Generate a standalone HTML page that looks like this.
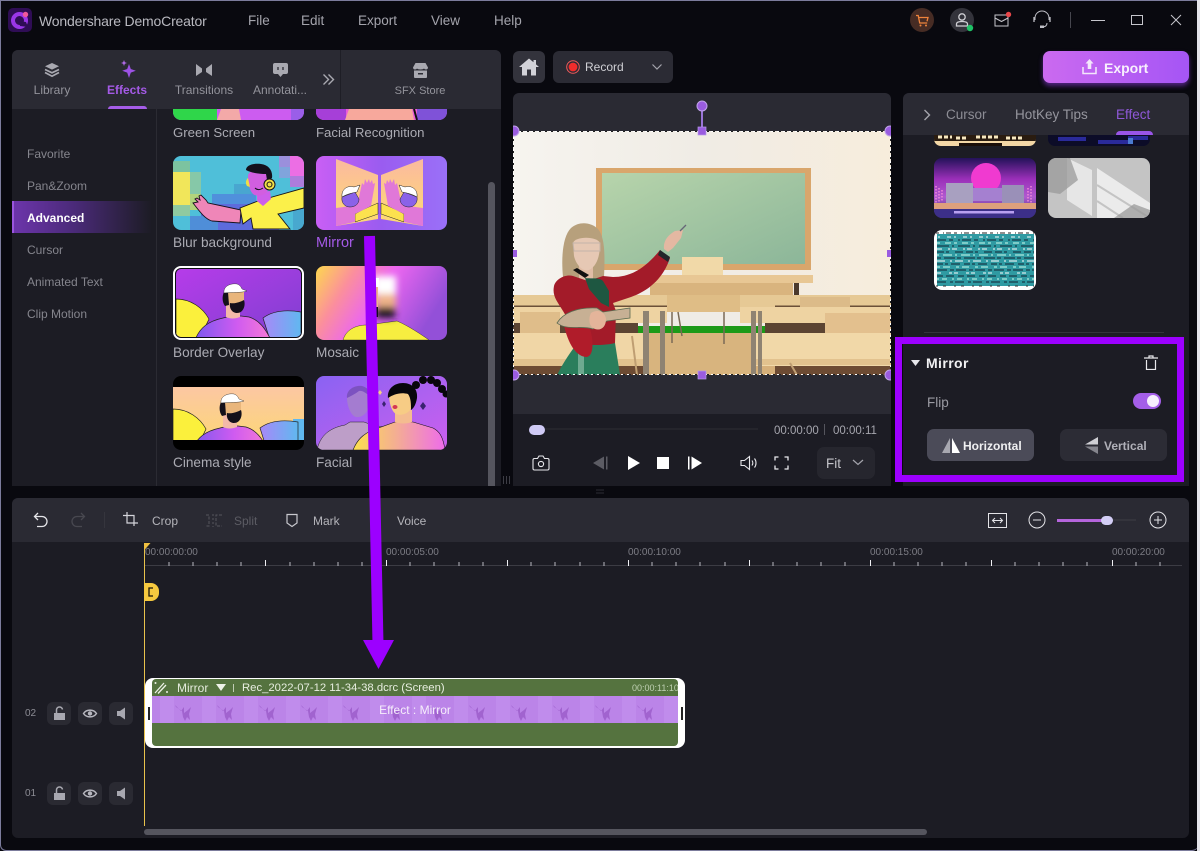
<!DOCTYPE html>
<html lang="en"><head><meta charset="utf-8"><title>Wondershare DemoCreator</title>
<style>
*{box-sizing:border-box}
html,body{margin:0;padding:0;width:1200px;height:851px;overflow:hidden;background:#08080e}
body{position:relative;font-family:"Liberation Sans","Noto Sans CJK SC",sans-serif;color:#aaa}
.a{position:absolute}
.t{position:absolute;white-space:nowrap;line-height:20px;height:20px}
.c{transform:translateX(-50%)}
svg{position:absolute;display:block;overflow:hidden}
.m{font-size:13.5px;color:#a4a4ac;top:11px}
.tab{font-size:12px;color:#93939b;top:80px}
.side{font-size:12px;color:#85858d;left:27px}
.lb{font-size:13.6px;color:#ababb3;margin-top:1px}
.th{position:absolute;width:131px;height:74px;border-radius:8px;overflow:hidden}
.tb{font-size:12px;color:#b4b4ba;top:511px}
.ru{font-size:10px;color:#7c7c84;top:543px}
.ib{position:absolute;width:24px;height:23px;border-radius:6px;background:#2a2a32}
</style></head><body>
<svg width="0" height="0" style="position:absolute"><defs>
<linearGradient id="gA" x1="0" y1="0" x2="1" y2="1"><stop offset="0" stop-color="#b83cea"/><stop offset="1" stop-color="#7d3fd0"/></linearGradient>
<linearGradient id="gB" x1="0" y1="0" x2="1" y2="0"><stop offset="0" stop-color="#7b58ee"/><stop offset=".55" stop-color="#cf5bf0"/><stop offset="1" stop-color="#f77ad6"/></linearGradient>
<linearGradient id="gC" x1="0" y1="0" x2="1" y2="0"><stop offset="0" stop-color="#a888f8"/><stop offset="1" stop-color="#60b8f0"/></linearGradient>
<linearGradient id="gD" x1="0" y1="0" x2="0" y2="1"><stop offset="0" stop-color="#fcc4ac"/><stop offset="1" stop-color="#fdd970"/></linearGradient>
<linearGradient id="gE" x1="0" y1="0" x2="1" y2="0.35"><stop offset="0" stop-color="#fdd84e"/><stop offset=".28" stop-color="#fb8f9c"/><stop offset=".55" stop-color="#ec66f0"/><stop offset="1" stop-color="#9350d8"/></linearGradient>
<linearGradient id="gF" x1="0" y1="0" x2="1" y2="0"><stop offset="0" stop-color="#c95ff5"/><stop offset=".5" stop-color="#9a5cf0"/><stop offset="1" stop-color="#9a70f8"/></linearGradient>
<linearGradient id="gG" x1="0" y1="0" x2="0" y2="1"><stop offset="0" stop-color="#fbb9a0"/><stop offset="1" stop-color="#fddc70"/></linearGradient>
<linearGradient id="gH" x1="0" y1="0" x2="1" y2="1"><stop offset="0" stop-color="#8a62f2"/><stop offset="1" stop-color="#cc60ee"/></linearGradient>
<linearGradient id="gI" x1="0" y1="0" x2="1" y2="0"><stop offset="0" stop-color="#fde04e"/><stop offset=".45" stop-color="#f4b090"/><stop offset="1" stop-color="#ee6cea"/></linearGradient>
<linearGradient id="gW" x1="0" y1="0" x2="1" y2="0"><stop offset="0" stop-color="#f6f4ef"/><stop offset=".5" stop-color="#f0ece5"/><stop offset="1" stop-color="#f7eddc"/></linearGradient>
<linearGradient id="gBd" x1="0" y1="0" x2="1" y2="1"><stop offset="0" stop-color="#b7d4ab"/><stop offset="1" stop-color="#8cb699"/></linearGradient>
<filter id="bl" x="-50%" y="-50%" width="200%" height="200%"><feGaussianBlur stdDeviation="3.500"/></filter>
<symbol id="man" viewBox="0 0 131 74">
<path d="M3 33C18 33 30 42 36 53L26 74H3Z" fill="#fbf03c" stroke="#222" stroke-width=".7"/>
<path d="M90 52C98 46 110 43 128 46V74H97Z" fill="url(#gC)" stroke="#222" stroke-width=".7"/>
<path d="M22 74C27 61 36 55 50 52L58 50H68L76 51C86 54 92 62 98 74Z" fill="url(#gB)" stroke="#222" stroke-width=".7"/>
<path d="M53 38H67V51C62 53 57 53 53 51Z" fill="#f3b9a8"/>
<path d="M54 25H71V38C68 42 60 42 56 38Z" fill="#e9b67c"/>
<path d="M51 26C49 30 49 36 52 40L56 39L55 26ZM57 37C62 38 67 36 71 34C73 40 70 47 64 47C59 47 56 42 57 37Z" fill="#14101a"/>
<path d="M51 27C50 20 58 17 64 18C67 19 68 21 69 23L74 25C68 27 60 26 51 27Z" fill="#fff" stroke="#222" stroke-width=".4"/>
</symbol>
<pattern id="film" width="42" height="27" patternUnits="userSpaceOnUse" x="8">
<rect width="42" height="27" fill="#bb84e8"/><rect x="0" width="14" height="27" fill="#c08cec"/>
<path d="M15 9l6 6 3-4 0 6 4-3 3-3-2 7 1 6-3-3-2 4-2-4-1-6-6-4z" fill="#a163cf"/>
</pattern>
</defs></svg>

<div class="a" style="left:0;top:0;width:1198px;height:851px;border:1px solid #7c7c9c;border-right:0;border-radius:0 0 6px 6px;background:#09090f"></div>
<div class="a" style="left:1197px;top:0;width:3px;height:851px;background:#e4e4ea"></div>

<!-- Title bar -->
<svg style="left:8px;top:8px" width="24" height="24" viewBox="0 0 24 24"><rect width="24" height="24" rx="5" fill="#2f0d55"/><circle cx="11.500" cy="12.500" r="6.500" fill="none" stroke="#9a36e8" stroke-width="4"/><path d="M11 13l7 1 2 5-8-1z" fill="#2f0d55"/><circle cx="17.500" cy="6.500" r="2.700" fill="#f0589c"/></svg>
<div class="t" style="left:39px;top:11px;font-size:14px;color:#b9b9c0;letter-spacing:-.18px">Wondershare DemoCreator</div>
<div class="t m" style="left:248px">File</div>
<div class="t m" style="left:301px">Edit</div>
<div class="t m" style="left:358px">Export</div>
<div class="t m" style="left:431px">View</div>
<div class="t m" style="left:494px">Help</div>

<svg style="left:910px;top:8px" width="24" height="24" viewBox="0 0 24 24"><circle cx="12" cy="12" r="12" fill="#472c24"/><path d="M6 7.500h2.200l1.500 7.500h7.500M8.800 9.500h9.200l-1 3.800" fill="none" stroke="#f0843c" stroke-width="1.300"/><circle cx="10.500" cy="17.500" r="1" fill="#f0843c"/><circle cx="16" cy="17.500" r="1" fill="#f0843c"/></svg>
<svg style="left:950px;top:8px" width="26" height="26" viewBox="0 0 26 26"><circle cx="12" cy="12" r="12" fill="#33333b"/><circle cx="12" cy="9" r="3.200" fill="none" stroke="#cfcfd4" stroke-width="1.300"/><path d="M6.500 18v-2c0-1.500 2-2.500 5.500-2.500s5.500 1 5.500 2.500v2z" fill="none" stroke="#cfcfd4" stroke-width="1.300"/><circle cx="20" cy="20" r="3.200" fill="#1fc267"/></svg>
<svg style="left:994px;top:10px" width="20" height="18" viewBox="0 0 20 18"><rect x="1" y="5" width="13" height="11" fill="none" stroke="#c6c6cc" stroke-width="1"/><path d="M1 8l6.500 3.500L14 8" fill="none" stroke="#c6c6cc" stroke-width="1"/><circle cx="14.500" cy="4.500" r="2.700" fill="#e8474a"/></svg>
<svg style="left:1032px;top:10px" width="20" height="20" viewBox="0 0 20 20"><path d="M3 10V8a7 7 0 0 1 14 0v2" fill="none" stroke="#bfbfc6" stroke-width="1"/><path d="M2 7v5M18 7v5" stroke="#bfbfc6" stroke-width="1.300"/><path d="M15 13c0 3-2 4-5 4" fill="none" stroke="#bfbfc6" stroke-width="1"/><rect x="8" y="15.500" width="4" height="2.500" fill="#bfbfc6"/></svg>
<div class="a" style="left:1070px;top:12px;width:1px;height:16px;background:#46464e"></div>
<div class="a" style="left:1091px;top:20px;width:14px;height:1px;background:#c6c6cc"></div>
<div class="a" style="left:1131px;top:15px;width:12px;height:10px;border:1px solid #c6c6cc"></div>
<svg style="left:1170px;top:14px" width="12" height="12" viewBox="0 0 12 12"><path d="M1 1l10 10M11 1L1 11" stroke="#c6c6cc" stroke-width="1"/></svg>

<!-- Left panel -->
<div class="a" style="left:12px;top:50px;width:489px;height:436px;background:#1c1c24;border-radius:6px 6px 0 0"></div>
<div class="a" style="left:12px;top:50px;width:489px;height:59px;background:#2a2a33;border-radius:6px 6px 0 0"></div>
<div class="a" style="left:340px;top:50px;width:1px;height:59px;background:#1e1e26"></div>
<div class="a" style="left:156px;top:109px;width:1px;height:377px;background:#2b2b33"></div>

<svg style="left:43px;top:62px" width="18" height="16" viewBox="0 0 18 16"><path d="M9 1l7 3.300-7 3.300-7-3.300z" fill="#a9a9b1"/><path d="M2 7.500l7 3.300 7-3.300M2 10.500l7 3.700 7-3.700" fill="none" stroke="#a9a9b1" stroke-width="1.700"/></svg>
<svg style="left:119px;top:60px" width="18" height="20" viewBox="0 0 18 20"><path d="M9 5l1.800 5 5 1.800-5 1.800L9 19l-1.800-5.400-5-1.800 5-1.800z" fill="#9d52e6" transform="translate(1,-1)"/><path d="M5 0l.8 2.300L8 3 5.800 3.800 5 6l-.8-2.200L2 3l2.200-.7z" fill="#b66cf0"/></svg>
<svg style="left:196px;top:63px" width="16" height="14" viewBox="0 0 16 14"><path d="M0 1l6 4.500V9L0 13zM16 1l-6 4.500V9l6 4z" fill="#a9a9b1"/></svg>
<svg style="left:273px;top:63px" width="15" height="15" viewBox="0 0 15 15"><path d="M2 0h11a2 2 0 0 1 2 2v7a2 2 0 0 1-2 2h-3l-2.500 3L5 11H2a2 2 0 0 1-2-2V2a2 2 0 0 1 2-2z" fill="#a9a9b1"/><path d="M5 4v3M10 4v3" stroke="#2a2a33" stroke-width="1.300"/></svg>
<svg style="left:322px;top:73px" width="13" height="13" viewBox="0 0 13 13"><path d="M1.500 1.500L6.500 6.500L1.500 11.500M6.500 1.500L11.500 6.500L6.500 11.500" fill="none" stroke="#a9a9b1" stroke-width="1.400"/></svg>
<svg style="left:413px;top:63px" width="15" height="15" viewBox="0 0 15 15"><path d="M2.500 0h10L15 4.500c0 1.200-1 2-2 2-.8 0-1.600-.4-2-1-.4.600-2 1-3.500 1S4.400 6.100 4 5.500c-.4.600-1.200 1-2 1-1 0-2-.8-2-2z" fill="#a9a9b1"/><path d="M1 7.500h13V14a1 1 0 0 1-1 1H2a1 1 0 0 1-1-1z" fill="#a9a9b1"/><rect x="5" y="10" width="5" height="1.500" fill="#2a2a33"/></svg>

<div class="t tab c" style="left:52px">Library</div>
<div class="t tab c" style="left:127px;color:#a45ae6;font-weight:bold">Effects</div>
<div class="t tab c" style="left:204px">Transitions</div>
<div class="t tab c" style="left:280px">Annotati...</div>
<div class="t tab c" style="left:420px;font-size:11px;margin-top:1px">SFX Store</div>
<div class="a" style="left:108px;top:106px;width:39px;height:3px;background:#a55de8;border-radius:3px 3px 0 0"></div>

<div class="a" style="left:12px;top:201px;width:140px;height:32px;background:linear-gradient(90deg,#6d35ac,#4a2a78 45%,#1c1c24)"></div>
<div class="a" style="left:12px;top:201px;width:2px;height:32px;background:#9a55de"></div>
<div class="t side" style="top:144px">Favorite</div>
<div class="t side" style="top:176px">Pan&amp;Zoom</div>
<div class="t side" style="top:208px;color:#fff;font-weight:bold">Advanced</div>
<div class="t side" style="top:240px">Cursor</div>
<div class="t side" style="top:272px">Animated Text</div>
<div class="t side" style="top:304px">Clip Motion</div>

<!-- top partial thumbs -->
<svg style="left:173px;top:109px;border-radius:0 0 8px 8px" width="131" height="11" viewBox="0 0 131 11"><rect width="131" height="11" fill="#cc5cf0"/><rect width="44" height="11" fill="#2fd64a"/><path d="M44 11L48 0H66L68 11Z" fill="#f3a9a8"/><rect x="118" width="13" height="11" fill="#9a5ee8"/></svg>
<svg style="left:316px;top:109px;border-radius:0 0 8px 8px" width="131" height="11" viewBox="0 0 131 11"><rect width="131" height="11" fill="#ea5cd8"/><rect width="30" height="11" fill="#a63fd8"/><path d="M29 11L33 0H96L98 11H29Z" fill="#f7a89c"/><rect x="101" width="30" height="11" fill="#7f52d8"/><path d="M98 0l3 11" stroke="#111" stroke-width="2"/></svg>
<div class="t lb" style="left:173px;top:122px;font-size:13.200px">Green Screen</div>
<div class="t lb" style="left:316px;top:122px;font-size:13.200px">Facial Recognition</div>

<!-- Blur background -->
<div class="th" style="left:173px;top:156px"><svg width="131" height="74" viewBox="0 0 131 74">
<rect width="131" height="74" fill="#4fbfd9"/>
<rect x="0" y="5" width="17" height="11" fill="#7cc3a0"/><rect x="0" y="16" width="17" height="33" fill="#f1e65a"/><rect x="17" y="16" width="11" height="22" fill="#86c8a8"/><rect x="0" y="49" width="17" height="11" fill="#8fcaa0"/><rect x="17" y="38" width="11" height="16" fill="#b2d47c"/>
<rect x="106" y="0" width="11" height="11" fill="#9b8fdc"/><rect x="117" y="0" width="14" height="20" fill="#ec6ee4"/><rect x="106" y="11" width="11" height="11" fill="#80a4dc"/><rect x="117" y="20" width="14" height="11" fill="#ad7cdc"/>
<rect x="61" y="28" width="22" height="10" fill="#49a6d0"/><rect x="39" y="38" width="44" height="10" fill="#5090dc"/><rect x="28" y="48" width="78" height="26" fill="#5d6bdc"/><rect x="17" y="60" width="28" height="14" fill="#4f8ed8"/><rect x="120" y="49" width="11" height="25" fill="#48a8cf"/>
<path d="M20 47l5-1-3-3 2-1 3 2-1-4 2-1 5 5 2 3 33 7-1 13-28-2C32 63 27 56 20 47z" fill="#ef86b8" stroke="#16121c" stroke-width=".9"/>
<path d="M67 52L85 45L131 32V52L105 58L117 73H80L78 62L70 68z" fill="#fbf04a" stroke="#16121c" stroke-width=".9"/>
<path d="M84 37l13-2 1 8-8 7-6-5z" fill="#cd5fea"/>
<path d="M75 19c3-7 16-7 19 1l1 14c-3 6-11 7-15 4-4-4-5-12-5-19z" fill="#d25ee0"/>
<path d="M73 14c0-5 8-7 15-6 8 1 12 7 11 14l-3 3-2-1-1-6c-6 0-15-1-20-4z" fill="#14101c"/>
<circle cx="96.500" cy="28.500" r="5.500" fill="#efde45" stroke="#16121c"/><circle cx="96.500" cy="28.500" r="2.500" fill="none" stroke="#16121c"/><path d="M75 22c-2 2-3 5-1 8l3 1z" fill="#efde45"/>
<path d="M82 32c2 2 5 2 8 0" fill="none" stroke="#16121c"/>
</svg></div>
<div class="t lb" style="left:173px;top:232px">Blur background</div>

<!-- Mirror -->
<div class="th" style="left:316px;top:156px"><svg width="131" height="74" viewBox="0 0 131 74">
<rect width="131" height="74" fill="url(#gF)"/>
<g>
<path d="M20 3L62 19V63L20 70Z" fill="url(#gG)"/>
<path d="M39 66L62 58V47L46 54L39 58z" fill="#fce24e" stroke="#222" stroke-width=".5"/>
<path d="M20 70V52C28 51 36 50 42 46L46 27L48 29L49 23L51 27L53 23L54 27L56 24L57 28L59 27L55 50L39 58V66Z" fill="#e078d8"/>
<path d="M26 41c-1 6 3 10 8 10 5 0 9-3 9-8l-4-7z" fill="#8a62e8" stroke="#222" stroke-width=".5"/>
<path d="M26 41C25 33 32 29 38 31L44 29L41 36C36 37 31 38 26 41Z" fill="#fff" stroke="#222" stroke-width=".5"/>
</g>
<g transform="translate(127,0) scale(-1,1)">
<path d="M20 3L62 19V63L20 70Z" fill="url(#gG)"/>
<path d="M39 66L62 58V47L46 54L39 58z" fill="#fce24e" stroke="#222" stroke-width=".5"/>
<path d="M20 70V52C28 51 36 50 42 46L46 27L48 29L49 23L51 27L53 23L54 27L56 24L57 28L59 27L55 50L39 58V66Z" fill="#e078d8"/>
<path d="M26 41c-1 6 3 10 8 10 5 0 9-3 9-8l-4-7z" fill="#8a62e8" stroke="#222" stroke-width=".5"/>
<path d="M26 41C25 33 32 29 38 31L44 29L41 36C36 37 31 38 26 41Z" fill="#fff" stroke="#222" stroke-width=".5"/>
</g>
</svg></div>
<div class="t lb" style="left:316px;top:232px;color:#a45ae6;font-size:14.500px">Mirror</div>

<!-- Border Overlay -->
<div class="th" style="left:173px;top:266px;background:#0c0c14;border:2px solid #fff;border-radius:8px"><svg style="left:1px;top:1px;border-radius:5px" width="125" height="68" viewBox="3 3 125 68">
<rect width="131" height="74" fill="url(#gA)"/><use href="#man" width="131" height="74"/></svg></div>
<div class="t lb" style="left:173px;top:342px">Border Overlay</div>

<!-- Mosaic -->
<div class="th" style="left:316px;top:266px"><svg width="131" height="74" viewBox="0 0 131 74">
<rect width="131" height="74" fill="url(#gE)"/>
<path d="M27 74c3-10 12-15 24-15l30-4c10 4 25 14 32 19z" fill="#f7ee40" stroke="#222" stroke-width=".4"/>
<g filter="url(#bl)"><rect x="58" y="10" width="22" height="18" fill="#fff"/><rect x="60" y="28" width="20" height="13" fill="#eeb38a"/><rect x="60" y="41" width="19" height="11" fill="#1a1420"/></g>
<rect x="55" y="12" width="8" height="9" fill="#fff"/><rect x="55" y="21" width="7" height="20" fill="#eeb38a"/><rect x="55" y="41" width="7" height="10" fill="#14101a"/>
</svg></div>
<div class="t lb" style="left:316px;top:342px">Mosaic</div>

<!-- Cinema -->
<div class="th" style="left:173px;top:376px;background:#000"><svg style="left:0;top:11px" width="131" height="53" viewBox="0 11 131 53">
<rect width="131" height="74" fill="url(#gD)"/><rect x="120" y="43" width="11" height="31" fill="#60b8f0"/><use href="#man" width="131" height="74" x="-3"/></svg></div>
<div class="t lb" style="left:173px;top:452px">Cinema style</div>

<!-- Facial -->
<div class="th" style="left:316px;top:376px"><svg width="131" height="74" viewBox="0 0 131 74">
<rect width="131" height="74" fill="url(#gH)"/>
<path d="M1 74c3-14 12-22 28-25l5-3h14l8 3 18 3v22z" fill="#bd9ec8" stroke="#222" stroke-width=".5"/>
<path d="M31 22c0-9 8-12 15-11 7 2 9 10 8 17-2 9-8 14-14 13-5-1-9-11-9-19z" fill="#a47cd0"/>
<path d="M31 22c-1-8 7-13 15-12 7 2 9 7 9 10-5-2-8-6-12-5-4 3-8 5-12 7z" fill="#7c52c0"/>
<path d="M37 74c4-10 10-16 20-20l22-8h18l20 6c6 3 10 8 12 22z" fill="url(#gI)" stroke="#16121c" stroke-width=".6"/>
<path d="M79 34h17v12c-5 2-12 2-17 0z" fill="#f4bc90"/>
<path d="M73 17c5-6 16-6 21 0l2 14c-3 7-11 9-16 7-5-3-7-12-7-21z" fill="#f7cc85"/>
<path d="M72 22c-1-9 6-15 15-15 9 0 15 6 14 15-1 6-3 10-6 12 0-6 0-12-3-16-7-2-14 0-20 4z" fill="#08060c"/>
<ellipse cx="79" cy="31" rx="2.500" ry="2" fill="#d63752"/>
<g fill="#08060c"><circle cx="100" cy="9" r="4"/><circle cx="107" cy="4" r="4"/><circle cx="115" cy="4" r="4"/><circle cx="121" cy="7" r="4"/><circle cx="126" cy="13" r="4"/><circle cx="130" cy="18" r="3.500"/></g>
<path d="M107 26l3 4-3 4-3-4z" fill="#3a2270"/><path d="M68 25l2 3-2 3-2-3z" fill="#3a2270"/><path d="M64 14l2 2.500-2 2.500-2-2.500z" fill="#f7cc85"/>
</svg></div>
<div class="t lb" style="left:316px;top:452px">Facial</div>

<div class="a" style="left:488px;top:182px;width:7px;height:304px;background:#55555e;border-radius:4px 4px 0 0"></div>
<svg style="left:502px;top:476px" width="10" height="8" viewBox="0 0 10 8"><path d="M1.500 0v8M4.500 0v8M7.500 0v8" stroke="#3d3d45"/></svg>
<svg style="left:596px;top:488px" width="8" height="8" viewBox="0 0 8 8"><path d="M0 2h8M0 5h8" stroke="#2b2b33"/></svg>

<!-- Top buttons -->
<div class="a" style="left:513px;top:51px;width:32px;height:32px;background:#33333c;border-radius:6px"></div>
<svg style="left:519px;top:58px" width="20" height="18" viewBox="0 0 20 18"><path d="M10 .5L0 9h3v8.500h5v-6h4v6h5V9h3l-3-2.600V2h-2.500v2.200z" fill="#d2d2d8"/></svg>
<div class="a" style="left:553px;top:51px;width:120px;height:32px;background:#2b2b34;border-radius:6px"></div>
<svg style="left:566px;top:60px" width="14" height="14" viewBox="0 0 14 14"><circle cx="7" cy="7" r="6.300" fill="none" stroke="#f05a5a"/><circle cx="7" cy="7" r="4.400" fill="#f02c2c"/></svg>
<div class="t" style="left:585px;top:57px;font-size:12px;color:#cfcfd4">Record</div>
<svg style="left:651px;top:63px" width="12" height="8" viewBox="0 0 12 8"><path d="M1.500 1.500L6 6l4.500-4.500" fill="none" stroke="#a4a4ac" stroke-width="1.200"/></svg>
<div class="a" style="left:1043px;top:51px;width:146px;height:32px;border-radius:7px;background:linear-gradient(90deg,#cb6af0,#a555f5);box-shadow:0 3px 5px rgba(140,60,220,.55)"></div>
<svg style="left:1082px;top:59px" width="15" height="16" viewBox="0 0 15 16"><path d="M7.500 0l4 4.500H9.300V10H5.700V4.500H3.500z" fill="#f3e6fb"/><path d="M1 8v6.500h13V8" fill="none" stroke="#f3e6fb" stroke-width="1.500"/></svg>
<div class="t" style="left:1104px;top:58px;font-size:14px;font-weight:bold;color:#f8f0fd">Export</div>

<!-- Preview -->
<div class="a" style="left:513px;top:93px;width:378px;height:393px;background:#2a2a33;border-radius:6px 6px 0 0"></div>
<div class="a" style="left:513px;top:414px;width:378px;height:72px;background:#1c1c24"></div>

<svg style="left:513px;top:131px" width="378" height="244" viewBox="0 0 378 244">
<rect width="378" height="244" fill="url(#gW)"/>
<rect x="83" y="37" width="215" height="102" fill="#d9a66c"/>
<rect x="89" y="42" width="203" height="91" fill="url(#gBd)"/>
<rect x="0" y="210" width="378" height="34" fill="#d6b07a"/>
<rect x="150" y="181" width="90" height="14" fill="#efece6"/>
<rect x="125" y="195" width="130" height="7" fill="#1c9a18"/>
<rect x="130" y="202" width="110" height="42" fill="#d8b47e"/>
<rect x="169" y="126" width="41" height="18" fill="#f1d9a8"/>
<rect x="137" y="152" width="143" height="14" fill="#d9b47e"/>
<rect x="140" y="144" width="160" height="8" fill="#e8c794"/>
<rect x="281" y="152" width="5" height="12" fill="#4c3a2c"/>
<rect x="0" y="164" width="164" height="12" fill="#e6c995"/><rect x="0" y="174.500" width="154" height="1.500" fill="#6b5038"/>
<rect x="225" y="164" width="153" height="12" fill="#e6c995"/><rect x="262" y="174.500" width="116" height="1.500" fill="#6b5038"/>
<rect x="287" y="166" width="50" height="10" fill="#dcbb89"/>
<rect x="154" y="164" width="73" height="17" fill="#dfbd86"/>
<rect x="0" y="176" width="154" height="16" fill="#eed3a2"/><rect x="227" y="176" width="151" height="16" fill="#eed3a2"/>
<rect x="0" y="192" width="125" height="10" fill="#5c4432"/><rect x="252" y="192" width="62" height="10" fill="#5c4432"/>
<rect x="312" y="182" width="66" height="20" fill="#e3c08e"/>
<rect x="7" y="181" width="40" height="21" fill="#dfbd8a"/>
<path d="M159 181v31M165 181l4 24M211 181v32" stroke="#7a6a56" stroke-width="1.500"/>
<rect x="0" y="202" width="132" height="33" fill="#f0d6a6"/><rect x="0" y="228" width="132" height="7" fill="#e2c28e"/>
<rect x="239" y="202" width="139" height="33" fill="#f1d8a8"/><rect x="239" y="228" width="139" height="6" fill="#e2c28e"/>
<rect x="0" y="235" width="130" height="9" fill="#6d4b33"/><rect x="262" y="235" width="116" height="9" fill="#6d4b33"/>
<rect x="130" y="180" width="6" height="64" fill="#8f8372"/><rect x="147" y="180" width="5" height="64" fill="#8f8372"/><rect x="238" y="180" width="5" height="64" fill="#8f8372"/><rect x="245" y="180" width="4" height="64" fill="#8f8372"/>
<path d="M119 205l5 39M277 232l7 12" stroke="#bf9e72" stroke-width="2"/>
<!-- teacher -->
<path d="M66 210L102 212L107 244H44C50 232 58 220 66 210Z" fill="#2a7e5c"/><path d="M65 218h6v26h-6z" fill="#6eaa90"/>
<path d="M50 146C48 125 50 105 58 97C66 90 78 91 85 98C92 106 92 125 91 146L70 152Z" fill="#b7a07c"/>
<path d="M66 133H80V150H66Z" fill="#e0bda6"/>
<path d="M60 112C62 105 84 105 87 112C87 125 84 135 76 139C70 141 63 134 61 125Z" fill="#e6c8b4"/>
<path d="M60 112H87V120H61Z" fill="none" stroke="#c4b4aa" stroke-width="1"/>
<path d="M60 145L75 150L90 145L100 146C115 146 130 140 147 119L157 127C150 148 135 160 118 166L100 172L103 180L102 212C95 214 72 216 66 210C62 200 56 190 50 180C44 170 39 165 41 155C43 148 52 143 60 145Z" fill="#a31b29"/>
<path d="M50 190C55 215 64 226 74 226C82 224 80 205 76 195Z" fill="#b01c2a"/>
<path d="M60 139L72 147L76 144L64 137Z" fill="#111"/>
<path d="M72 147C80 148 86 146 90 150L96 160L96 176L88 172L76 158Z" fill="#1e5741"/>
<path d="M147 119l10 7-2 5-10-7z" fill="#24262a"/>
<path d="M151 118C150 110 155 104 162 100L170 99L168 107L160 117L155 121Z" fill="#e4b8a2"/><path d="M167 100L173 94" stroke="#667" stroke-width="1.300"/>
<path d="M44 192C50 182 64 176 84 177L90 181L117 177L117 187L94 190L80 198C68 194 54 200 44 192Z" fill="#c7b094" stroke="#5a6a50" stroke-width=".8"/>
<path d="M78 182C84 178 92 180 93 188C93 196 88 200 82 198C76 196 75 188 78 182Z" fill="#e4b49a"/>
<g fill="none" stroke="#fff" stroke-width="1" stroke-dasharray="4 2"><path d="M0 .5H378M0 243.500H378M377.500 0V244M.5 0V244"/></g>
<g fill="none" stroke="#222" stroke-width="1" stroke-dasharray="2 4" stroke-dashoffset="4"><path d="M0 .5H378M0 243.500H378M377.500 0V244M.5 0V244"/></g>
</svg>
<svg style="left:513px;top:98px" width="378" height="288" viewBox="4 0 378 288">
<path d="M193 10V30" stroke="#9a74d8" stroke-width="2"/><circle cx="193" cy="8" r="5" fill="#9a5ce0" stroke="#c0a4ea"/>
<rect x="189" y="29" width="8" height="8" fill="#9a5ce0" stroke="#b79aec" stroke-width=".7"/><rect x="189" y="273" width="8" height="8" fill="#9a5ce0" stroke="#b79aec" stroke-width=".7"/>
<rect x="4" y="152" width="4" height="7" fill="#9a5ce0"/><rect x="378" y="152" width="4" height="7" fill="#9a5ce0"/>
<circle cx="5" cy="33" r="5" fill="#9a5ce0" stroke="#c0a4ea"/><circle cx="381" cy="33" r="5" fill="#9a5ce0" stroke="#c0a4ea"/><circle cx="5" cy="277" r="5" fill="#9a5ce0" stroke="#c0a4ea"/><circle cx="381" cy="277" r="5" fill="#9a5ce0" stroke="#c0a4ea"/>
</svg>

<div class="a" style="left:537px;top:428px;width:221px;height:2px;background:#25252c"></div>
<div class="a" style="left:529px;top:425px;width:16px;height:10px;border-radius:5px;background:#cfcaf5"></div>
<div class="t" style="left:774px;top:421px;font-size:11.500px;color:#a6a6ae">00:00:00</div>
<div class="a" style="left:824px;top:424px;width:1px;height:11px;background:#55555d"></div>
<div class="t" style="left:833px;top:421px;font-size:11.500px;color:#a6a6ae">00:00:11</div>
<svg style="left:532px;top:455px" width="18" height="16" viewBox="0 0 18 16"><path d="M2.500 3.500H5.500L7 1H11L12.500 3.500H15.500a1.500 1.500 0 0 1 1.500 1.500V13.500a1.500 1.500 0 0 1-1.500 1.500H2.500A1.500 1.500 0 0 1 1 13.500V5a1.500 1.500 0 0 1 1.500-1.500z" fill="none" stroke="#e8e8ec" stroke-width="1.100"/><circle cx="9" cy="9" r="2.600" fill="none" stroke="#e8e8ec" stroke-width="1.100"/></svg>
<svg style="left:593px;top:456px" width="15" height="14" viewBox="0 0 15 14"><path d="M11 .5v13L0 7z" fill="#5c5c64"/><rect x="13" y=".5" width="1.500" height="13" fill="#5c5c64"/></svg>
<svg style="left:628px;top:456px" width="12" height="14" viewBox="0 0 12 14"><path d="M0 0l12 7L0 14z" fill="#fff"/></svg>
<div class="a" style="left:657px;top:457px;width:12px;height:12px;background:#fff"></div>
<svg style="left:688px;top:456px" width="14" height="14" viewBox="0 0 14 14"><rect x="0" y=".5" width="1.500" height="13" fill="#fff"/><path d="M3.500 .5L14 7 3.500 13.500z" fill="#fff"/></svg>
<svg style="left:740px;top:455px" width="19" height="16" viewBox="0 0 19 16"><path d="M1 5.500H4.500L9.500 1.500V14.500L4.500 10.500H1z" fill="none" stroke="#e8e8ec" stroke-width="1.100"/><path d="M12 5.500c1 1.500 1 3.500 0 5M14.500 3.500c2 2.500 2 6.500 0 9" fill="none" stroke="#e8e8ec" stroke-width="1.100"/></svg>
<svg style="left:774px;top:456px" width="15" height="14" viewBox="0 0 15 14"><path d="M1 4.500V1H4.500M10.500 1H14V4.500M14 9.500V13H10.500M4.500 13H1V9.500" fill="none" stroke="#e8e8ec" stroke-width="1.300"/></svg>
<div class="a" style="left:817px;top:447px;width:58px;height:32px;background:#26262e;border-radius:7px"></div>
<div class="t" style="left:826px;top:454px;font-size:13.500px;color:#c4c4ca">Fit</div>
<svg style="left:852px;top:459px" width="12" height="7" viewBox="0 0 12 7"><path d="M1 1l5 4.500L11 1" fill="none" stroke="#a4a4ac" stroke-width="1.200"/></svg>

<!-- Right panel -->
<div class="a" style="left:903px;top:93px;width:286px;height:393px;background:#1c1c24;border-radius:6px 6px 0 0"></div>
<div class="a" style="left:903px;top:93px;width:286px;height:42px;background:#2a2a33;border-radius:6px 6px 0 0"></div>
<svg style="left:923px;top:109px" width="8" height="12" viewBox="0 0 8 12"><path d="M1.500 1l5 5-5 5" fill="none" stroke="#a4a4ac" stroke-width="1.400"/></svg>
<div class="t" style="left:946px;top:105px;font-size:13.500px;color:#8d8d95">Cursor</div>
<div class="t" style="left:1015px;top:105px;font-size:13.500px;color:#96969e">HotKey Tips</div>
<div class="t" style="left:1116px;top:105px;font-size:13.500px;color:#8f58d8">Effect</div>
<div class="a" style="left:1116px;top:131px;width:37px;height:4px;background:#9a55e8;border-radius:4px 4px 0 0"></div>

<svg style="left:934px;top:135px;border-radius:0 0 7px 7px" width="102" height="11" viewBox="0 0 102 11"><rect width="102" height="11" fill="#f3d7a6"/><rect x="0" y="0" width="102" height="6" fill="#2a1c10"/><path d="M4 2h14M22 3h10M42 2h24M72 3h18" stroke="#f7e8c0" stroke-width="3" stroke-dasharray="4 2"/><rect x="25" y="8" width="43" height="3" fill="#1a0e08"/></svg>
<svg style="left:1048px;top:135px;border-radius:0 0 7px 7px" width="102" height="11" viewBox="0 0 102 11"><rect width="102" height="11" fill="#0c0c28"/><path d="M10 4h28M50 7h30M80 3h20" stroke="#2a2a9a" stroke-width="4"/><rect x="80" y="3" width="5" height="6" fill="#4a7ad0"/></svg>
<svg style="left:934px;top:158px;border-radius:8px" width="102" height="60" viewBox="0 0 102 60">
<defs><linearGradient id="v1" x1="0" y1="0" x2="0" y2="1"><stop offset="0" stop-color="#231259"/><stop offset=".35" stop-color="#9a2fb8"/><stop offset=".65" stop-color="#b05ad0"/><stop offset="1" stop-color="#3a2a78"/></linearGradient></defs>
<rect width="102" height="60" fill="url(#v1)"/><circle cx="52" cy="20" r="15" fill="#f03ad0"/>
<rect x="12" y="25" width="27" height="20" fill="#a8a0c0"/><rect x="68" y="27" width="22" height="18" fill="#9a90b8"/><rect x="39" y="30" width="29" height="13" fill="#a580d0"/>
<path d="M2 28v20M5 30v16M8 32v12M94 30v16M97 28v20" stroke="#f088d8" stroke-width="1.500" stroke-dasharray="1.500 1.500"/>
<rect x="0" y="45" width="102" height="6" fill="#dda07c"/><rect x="0" y="51" width="102" height="9" fill="#3c2f88"/><rect x="20" y="53" width="60" height="2.500" fill="#b9a0f0"/>
</svg>
<svg style="left:1048px;top:158px;border-radius:8px" width="102" height="60" viewBox="0 0 102 60">
<rect width="102" height="60" fill="#c4c4c4"/><path d="M19 0L44 12V58L19 42z" fill="#e6e6e6"/><path d="M49 10L102 45V60H49z" fill="#ebebeb"/><path d="M49 27L102 60M49 43L75 60" stroke="#c4c4c4" stroke-width="2"/><path d="M0 0H22L30 22 12 36 0 34z" fill="#9a9a9a" opacity=".75"/><path d="M66 60l20-14 16 6v8z" fill="#999" opacity=".75"/>
</svg>
<svg style="left:934px;top:230px;border-radius:8px" width="102" height="60" viewBox="0 0 102 60">
<rect width="102" height="60" fill="#fff"/><rect x="3" y="4" width="97" height="52" fill="#2f9aa2"/>
<g fill="none" stroke-width="1"><path d="M2 3H100" stroke="#222" stroke-dasharray="3 4 1 2 5 3"/><path d="M4 7H100" stroke="#fff" stroke-dasharray="2 7 4 3"/><path d="M3 10H100" stroke="#123" stroke-dasharray="9 3 4 5 2 2"/><path d="M3 13H100" stroke="#cfe" stroke-dasharray="3 5 6 3"/><path d="M3 16H100" stroke="#123" stroke-dasharray="12 3 2 4"/><path d="M3 19H100" stroke="#fff" stroke-dasharray="5 6 2 2"/><path d="M3 22H100" stroke="#123" stroke-dasharray="7 2 3 6 8 3"/><path d="M3 25H100" stroke="#cfe" stroke-dasharray="2 4 9 3"/><path d="M3 28H100" stroke="#123" stroke-dasharray="4 3 11 2"/><path d="M3 31H100" stroke="#fff" stroke-dasharray="8 5 2 3"/><path d="M3 34H100" stroke="#123" stroke-dasharray="6 2 3 3 9 4"/><path d="M3 37H100" stroke="#cfe" stroke-dasharray="3 3 7 6"/><path d="M3 40H100" stroke="#123" stroke-dasharray="10 3 4 2"/><path d="M3 43H100" stroke="#fff" stroke-dasharray="4 8 3 2"/><path d="M3 46H100" stroke="#123" stroke-dasharray="6 3 8 4"/><path d="M3 49H100" stroke="#cfe" stroke-dasharray="2 3 5 5"/><path d="M3 52H100" stroke="#123" stroke-dasharray="9 4 3 2"/><path d="M2 56H100" stroke="#333" stroke-dasharray="2 5 3 8"/></g>
</svg>
<div class="a" style="left:924px;top:332px;width:240px;height:1px;background:#33333b"></div>

<!-- Mirror settings -->
<svg style="left:911px;top:360px" width="9" height="6" viewBox="0 0 9 6"><path d="M0 0h9L4.500 6z" fill="#e8e8ec"/></svg>
<div class="t" style="left:926px;top:353px;font-size:14px;font-weight:bold;color:#f0f0f2;letter-spacing:.4px">Mirror</div>
<svg style="left:1144px;top:355px" width="14" height="15" viewBox="0 0 14 15"><path d="M0 3h14M5 3V1h4v2M2.500 5v9.500h9V5" fill="none" stroke="#e8e8ec" stroke-width="1.200"/></svg>
<div class="t" style="left:927px;top:393px;font-size:13.500px;color:#9a9aa2">Flip</div>
<div class="a" style="left:1133px;top:393px;width:28px;height:16px;border-radius:8px;background:#a45ee8"></div>
<div class="a" style="left:1147px;top:395px;width:12px;height:12px;border-radius:50%;background:#f6eefc"></div>
<div class="a" style="left:927px;top:429px;width:107px;height:32px;border-radius:7px;background:#4b4b58"></div>
<div class="a" style="left:1060px;top:429px;width:107px;height:32px;border-radius:7px;background:#2c2c35"></div>
<svg style="left:942px;top:438px" width="18" height="15" viewBox="0 0 18 15"><path d="M8 0V15H0z" fill="#a8a8b0"/><path d="M10 0V15H18z" fill="#fff"/></svg>
<div class="t" style="left:963px;top:436px;font-size:12px;font-weight:bold;color:#f0f0f2">Horizontal</div>
<svg style="left:1085px;top:437px" width="15" height="17" viewBox="0 0 15 17"><path d="M13 0V7.500H0z" fill="#cfcfd4"/><path d="M13 17V9.500H0z" fill="#85858d"/></svg>
<div class="t" style="left:1104px;top:436px;font-size:12px;font-weight:bold;color:#b0b0b8">Vertical</div>
<div class="a" style="left:895px;top:337px;width:289px;height:145px;border:7px solid #9c00ff"></div>

<!-- Timeline -->
<div class="a" style="left:12px;top:498px;width:1177px;height:340px;background:#1c1c24;border-radius:6px"></div>
<div class="a" style="left:12px;top:498px;width:1177px;height:44px;background:#2a2a33;border-radius:6px 6px 0 0"></div>
<svg style="left:33px;top:512px" width="15" height="16" viewBox="0 0 15 16"><path d="M5 1L1.500 4.500 5 8M2 4.500H9a4.800 4.800 0 0 1 0 10H4" fill="none" stroke="#e4e4e8" stroke-width="1.300"/></svg>
<svg style="left:71px;top:512px" width="15" height="16" viewBox="0 0 15 16"><path d="M10 1l3.500 3.500L10 8M13 4.500H6a4.800 4.800 0 0 0 0 10h5" fill="none" stroke="#484850" stroke-width="1.300"/></svg>
<div class="a" style="left:104px;top:512px;width:1px;height:16px;background:#35353d"></div>
<svg style="left:123px;top:512px" width="17" height="16" viewBox="0 0 17 16"><path d="M0 3.500H11V14M4 0V11H15" fill="none" stroke="#d4d4da" stroke-width="1.200"/></svg>
<div class="t tb" style="left:152px">Crop</div>
<svg style="left:205px;top:514px" width="18" height="13" viewBox="0 0 18 13"><path d="M1 1H4V12H1M17 1H11V12H17" fill="none" stroke="#55555d" stroke-dasharray="3 1.500"/><path d="M8 0V13" stroke="#55555d" stroke-dasharray="2 2"/></svg>
<div class="t tb" style="left:234px;color:#5c5c64">Split</div>
<svg style="left:286px;top:513px" width="12" height="15" viewBox="0 0 12 15"><path d="M1 1.500H11V10L6 13.500 1 10z" fill="none" stroke="#c8c8ce" stroke-width="1.200"/></svg>
<div class="t tb" style="left:313px">Mark</div>
<div class="t tb" style="left:397px">Voice</div>
<svg style="left:988px;top:513px" width="20" height="16" viewBox="0 0 20 16"><rect x=".5" y=".5" width="18" height="14" fill="none" stroke="#e4e4e8"/><path d="M4.500 7.500H14.500M7 5L4.500 7.500 7 10M12 5l2.500 2.500L12 10" fill="none" stroke="#e4e4e8"/></svg>
<svg style="left:1028px;top:511px" width="18" height="18" viewBox="0 0 18 18"><circle cx="9" cy="9" r="8" fill="none" stroke="#e4e4e8"/><path d="M5 9h8" stroke="#e4e4e8"/></svg>
<div class="a" style="left:1057px;top:519px;width:79px;height:2px;background:#34343c"></div>
<div class="a" style="left:1057px;top:519px;width:50px;height:3px;background:#b565dc"></div>
<div class="a" style="left:1101px;top:516px;width:12px;height:9px;border-radius:5px;background:#d3cef6"></div>
<svg style="left:1149px;top:511px" width="18" height="18" viewBox="0 0 18 18"><circle cx="9" cy="9" r="8" fill="none" stroke="#e4e4e8"/><path d="M5 9h8M9 5v8" stroke="#e4e4e8"/></svg>

<!-- Ruler -->
<div class="t ru" style="left:145px">00:00:00:00</div>
<div class="t ru" style="left:386px">00:00:05:00</div>
<div class="t ru" style="left:628px">00:00:10:00</div>
<div class="t ru" style="left:870px">00:00:15:00</div>
<div class="t ru" style="left:1112px">00:00:20:00</div>
<svg style="left:0;top:555px" width="1200" height="15" viewBox="0 0 1200 15">
<path d="M145 10.500H1182" stroke="#3c3c44"/>
<path stroke="#b8b8c0" d="M169 7v4M193 7v4M217 7v4M241 7v4M290 7v4M314 7v4M338 7v4M362 7v4M410 7v4M434 7v4M459 7v4M483 7v4M531 7v4M555 7v4M580 7v4M604 7v4M652 7v4M676 7v4M700 7v4M725 7v4M773 7v4M797 7v4M821 7v4M845 7v4M894 7v4M918 7v4M942 7v4M966 7v4M1015 7v4M1039 7v4M1063 7v4M1087 7v4M1136 7v4M1160 7v4"/>
<path stroke="#f0f0f4" d="M265.500 5v6M386.500 5v6M507.500 5v6M628.500 5v6M749.500 5v6M870.500 5v6M991.500 5v6M1112.500 5v6"/>
</svg>

<!-- Track rows -->
<div class="t" style="left:25px;top:704px;font-size:10px;color:#8c8c94">02</div>
<div class="t" style="left:25px;top:784px;font-size:10px;color:#8c8c94">01</div>
<div class="ib" style="left:47px;top:702px"></div><div class="ib" style="left:78px;top:702px"></div><div class="ib" style="left:109px;top:702px"></div>
<div class="ib" style="left:47px;top:782px"></div><div class="ib" style="left:78px;top:782px"></div><div class="ib" style="left:109px;top:782px"></div>
<svg style="left:0;top:0;pointer-events:none" width="140" height="851" viewBox="0 0 140 851">
<g><path d="M54 713H65V720H54z" fill="#a8a8b0"/><path d="M56.500 713v-2.500a3 3 0 0 1 6-1" fill="none" stroke="#a8a8b0" stroke-width="1.500"/>
<path d="M83.500 713.500c3-4.500 10-4.500 13 0-3 4.500-10 4.500-13 0z" fill="none" stroke="#b8b8c0" stroke-width="1.400"/><circle cx="90" cy="713.500" r="2.200" fill="#b8b8c0"/>
<path d="M117 711h3l5-3.500v12l-5-3.500h-3z" fill="#a8a8b0"/></g>
<g transform="translate(0,80)"><path d="M54 713H65V720H54z" fill="#a8a8b0"/><path d="M56.500 713v-2.500a3 3 0 0 1 6-1" fill="none" stroke="#a8a8b0" stroke-width="1.500"/>
<path d="M83.500 713.500c3-4.500 10-4.500 13 0-3 4.500-10 4.500-13 0z" fill="none" stroke="#b8b8c0" stroke-width="1.400"/><circle cx="90" cy="713.500" r="2.200" fill="#b8b8c0"/>
<path d="M117 711h3l5-3.500v12l-5-3.500h-3z" fill="#a8a8b0"/></g>
</svg>

<!-- Clip -->
<div class="a" style="left:145px;top:678px;width:540px;height:70px;background:#fff;border-radius:8px"></div>
<div class="a" style="left:152px;top:679px;width:526px;height:67px;background:#55733f;border-radius:4px"></div>
<svg style="left:152px;top:696px" width="526" height="27" viewBox="0 0 526 27"><rect width="526" height="27" fill="url(#film)"/></svg>
<svg style="left:153px;top:680px" width="16" height="15" viewBox="0 0 16 15"><path d="M2 13L11 3M5 13.500L13 5" stroke="#eef2e8" stroke-width="1.300"/><circle cx="2.500" cy="3" r="1" fill="#eef2e8"/><circle cx="14" cy="12" r="1" fill="#eef2e8"/></svg>
<div class="t" style="left:177px;top:678px;font-size:12px;color:#e4eadc">Mirror</div>
<svg style="left:216px;top:684px" width="10" height="7" viewBox="0 0 10 7"><path d="M0 0h10L5 7z" fill="#eef2e8"/></svg>
<div class="a" style="left:233px;top:684px;width:1px;height:8px;background:#c0ccb4"></div>
<div class="t" style="left:242px;top:678px;font-size:11.300px;color:#e8eee0">Rec_2022-07-12 11-34-38.dcrc (Screen)</div>
<div class="t" style="left:632px;top:678px;width:46px;overflow:hidden;font-size:9px;color:#bfd0b2">00:00:11:10</div>
<div class="t" style="left:415px;top:700px;font-size:12px;color:#f6eefb;transform:translateX(-50%)">Effect : Mirror</div>
<div class="a" style="left:148px;top:707px;width:2px;height:13px;background:#222"></div>
<div class="a" style="left:681px;top:707px;width:2px;height:13px;background:#222"></div>

<!-- Playhead -->
<div class="a" style="left:144px;top:543px;width:1px;height:283px;background:#e8c24c"></div>
<svg style="left:144px;top:543px" width="7" height="8" viewBox="0 0 7 8"><path d="M0 0h6.500L0 7.500z" fill="#f0c040"/></svg>
<div class="a" style="left:144px;top:583px;width:15px;height:18px;background:#f6c93f;border-radius:0 8px 8px 0"></div>
<svg style="left:147px;top:587px" width="7" height="10" viewBox="0 0 7 10"><path d="M6 1H2V9H6" fill="none" stroke="#1a1408" stroke-width="1.300"/></svg>

<div class="a" style="left:144px;top:829px;width:783px;height:6px;background:#55555e;border-radius:3px"></div>

<!-- Purple arrow -->
<svg style="left:0;top:0;pointer-events:none" width="1200" height="851" viewBox="0 0 1200 851">
<path d="M369.500 236L378 644" stroke="#9c00ff" stroke-width="11" fill="none"/>
<path d="M363 640H394L378.500 669Z" fill="#9c00ff"/>
</svg>
</body></html>
